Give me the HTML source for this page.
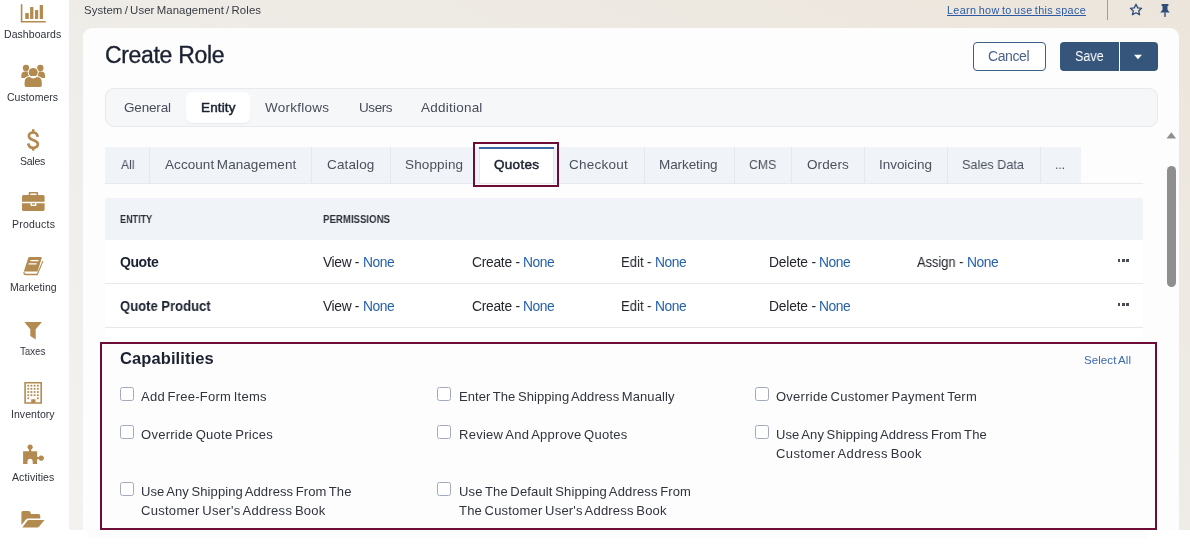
<!DOCTYPE html>
<html><head><meta charset="utf-8"><style>
html,body{margin:0;padding:0;}
body{width:1190px;height:559px;position:relative;overflow:hidden;background:#ffffff;font-family:"Liberation Sans",sans-serif;}
.t{position:absolute;white-space:nowrap;line-height:1;will-change:transform;}
.r{position:absolute;}
</style></head><body>
<div class="r" style="left:69px;top:0px;width:1121px;height:530px;background:linear-gradient(to top right,#f3f2ef 0%,#efede9 45%,#ece5db 100%);"></div>
<div class="r" style="left:83px;top:28px;width:1096px;height:510px;background:#fdfdfd;border-radius:9px 9px 0 0;"></div>
<div class="r" style="left:0px;top:530px;width:1190px;height:29px;background:#ffffff;"></div>
<div class="r" style="left:87px;top:530px;width:1061px;height:8px;background:#fcfcfc;"></div>
<div class="r" style="left:0px;top:0px;width:69px;height:530px;background:#ffffff;"></div>
<svg style="position:absolute;left:16px;top:0px" width="36" height="26" viewBox="16 0 36 26">
<rect x="20.8" y="4" width="1.6" height="18.6" rx="0.8" fill="#b38a4f"/>
<rect x="20.8" y="20.9" width="25.2" height="1.7" rx="0.8" fill="#b38a4f"/>
<rect x="25.2" y="13" width="3.6" height="6" rx="0.6" fill="#b38a4f"/>
<rect x="30.1" y="7" width="3.3" height="12" rx="0.6" fill="#b38a4f"/>
<rect x="35" y="10" width="3.2" height="9" rx="0.6" fill="#b38a4f"/>
<rect x="39.7" y="4.9" width="3.3" height="14.1" rx="0.6" fill="#b38a4f"/>
</svg>
<svg style="position:absolute;left:16px;top:60px" width="36" height="32" viewBox="16 60 36 32">
<circle cx="26" cy="68" r="3.2" fill="#b38a4f"/>
<circle cx="40.3" cy="68" r="3.2" fill="#b38a4f"/>
<path d="M21.4 75.5 Q21.4 71.5 25 71.5 L28 71.5 Q29 74 30 76 L27 78 L21.4 78 Z" fill="#b38a4f"/>
<path d="M45 75.5 Q45 71.5 41.4 71.5 L38.4 71.5 Q37.4 74 36.4 76 L39.4 78 L45 78 Z" fill="#b38a4f"/>
<circle cx="33.2" cy="72.4" r="5.4" fill="#fff"/>
<circle cx="33.2" cy="72.4" r="4.5" fill="#b38a4f"/>
<path d="M23.6 87.8 L23.6 82 Q23.6 76 29.6 76 L36.8 76 Q42.8 76 42.8 82 L42.8 87.8 Z" fill="#fff"/>
<path d="M24.6 85.3 L24.6 82.4 Q24.6 77 29.8 77 Q31 78.4 33.2 78.4 Q35.4 78.4 36.6 77 Q41.8 77 41.8 82.4 L41.8 85.3 Q41.8 86.9 40.2 86.9 L26.2 86.9 Q24.6 86.9 24.6 85.3 Z" fill="#b38a4f"/>
</svg>
<svg style="position:absolute;left:20px;top:124px" width="26" height="32" viewBox="20 124 26 32">
<rect x="32" y="129.2" width="2.5" height="3.5" fill="#b38a4f"/>
<rect x="32" y="147" width="2.5" height="3.6" fill="#b38a4f"/>
<path d="M37.4 135.6 C36.8 133.6 35.3 132.5 33.2 132.5 C30.5 132.5 28.9 133.9 28.9 136.1 C28.9 141.3 37.9 139.3 37.9 144.1 C37.9 146.5 36 147.8 33.2 147.8 C30.7 147.8 29.1 146.7 28.5 144.6" fill="none" stroke="#b38a4f" stroke-width="2.7" stroke-linecap="square"/>
</svg>
<svg style="position:absolute;left:18px;top:186px" width="32" height="30" viewBox="18 186 32 30">
<path d="M28.7 195 L28.7 192.8 Q28.7 191.9 29.6 191.9 L37.2 191.9 Q38.1 191.9 38.1 192.8 L38.1 195 L36.5 195 L36.5 193.4 L30.3 193.4 L30.3 195 Z" fill="#b38a4f"/>
<path d="M22 201.8 L22 196.5 Q22 194.9 23.6 194.9 L43 194.9 Q44.6 194.9 44.6 196.5 L44.6 201.8 Z" fill="#b38a4f"/>
<path d="M22 203.2 L30.6 203.2 L30.6 205.9 L36.3 205.9 L36.3 203.2 L44.6 203.2 L44.6 209.4 Q44.6 211 43 211 L23.6 211 Q22 211 22 209.4 Z" fill="#b38a4f"/>
<rect x="32" y="203.2" width="2.9" height="1.4" fill="#b38a4f"/>
</svg>
<svg style="position:absolute;left:18px;top:250px" width="32" height="32" viewBox="18 250 32 32">
<path d="M28.3 257.8 Q28.6 256.9 29.5 256.9 L41 256.9 Q42 257 41.7 258 L37.6 271.6 L24.6 271.6 Q23.4 271.6 23.4 272.8 Z" fill="#b38a4f"/>
<path d="M23.4 272 Q23 275.3 26 275.3 L37.6 275.3 L43.4 261.3 L42.4 261 L37 273.7 L26 273.7 Q24.6 273.7 24.8 272.4 Z" fill="#b38a4f"/>
<rect x="30.2" y="260" width="8" height="1.3" fill="#fff" transform="skewX(-16) translate(75 0)"/>
<rect x="29.3" y="263.3" width="8" height="1.3" fill="#fff" transform="skewX(-16) translate(75 0)"/>
</svg>
<svg style="position:absolute;left:18px;top:316px" width="32" height="30" viewBox="18 316 32 30">
<path d="M24.4 321.9 L41.9 321.9 L35.7 329.2 L35.7 339.6 L30.3 335.9 L30.3 329.2 Z" fill="#b38a4f"/>
</svg>
<svg style="position:absolute;left:18px;top:378px" width="32" height="32" viewBox="18 378 32 32"><path d="M24.3 382 L42 382 L42 403.8 L24.3 403.8 Z M25.9 383.6 L25.9 402.2 L31.2 402.2 L31.2 399.2 L35.5 399.2 L35.5 402.2 L40.4 402.2 L40.4 383.6 Z" fill="#b38a4f" fill-rule="evenodd"/><rect x="27.400000000000002" y="384.8" width="1.8" height="1.8" fill="#b38a4f"/><rect x="30.5" y="384.8" width="1.8" height="1.8" fill="#b38a4f"/><rect x="33.7" y="384.8" width="1.8" height="1.8" fill="#b38a4f"/><rect x="36.9" y="384.8" width="1.8" height="1.8" fill="#b38a4f"/><rect x="27.400000000000002" y="387.90000000000003" width="1.8" height="1.8" fill="#b38a4f"/><rect x="30.5" y="387.90000000000003" width="1.8" height="1.8" fill="#b38a4f"/><rect x="33.7" y="387.90000000000003" width="1.8" height="1.8" fill="#b38a4f"/><rect x="36.9" y="387.90000000000003" width="1.8" height="1.8" fill="#b38a4f"/><rect x="27.400000000000002" y="391.1" width="1.8" height="1.8" fill="#b38a4f"/><rect x="30.5" y="391.1" width="1.8" height="1.8" fill="#b38a4f"/><rect x="33.7" y="391.1" width="1.8" height="1.8" fill="#b38a4f"/><rect x="36.9" y="391.1" width="1.8" height="1.8" fill="#b38a4f"/><rect x="27.400000000000002" y="394.3" width="1.8" height="1.8" fill="#b38a4f"/><rect x="30.5" y="394.3" width="1.8" height="1.8" fill="#b38a4f"/><rect x="33.7" y="394.3" width="1.8" height="1.8" fill="#b38a4f"/><rect x="36.9" y="394.3" width="1.8" height="1.8" fill="#b38a4f"/><rect x="27.400000000000002" y="397.40000000000003" width="1.8" height="1.8" fill="#b38a4f"/><rect x="36.9" y="397.40000000000003" width="1.8" height="1.8" fill="#b38a4f"/></svg>
<svg style="position:absolute;left:18px;top:440px" width="32" height="30" viewBox="18 440 32 30">
<path d="M23.1 451.3 L28.6 451.3 Q29.4 450.6 29 449.6 A2.7 2.7 0 1 1 31.2 449.6 Q30.8 450.6 31.6 451.3 L37.1 451.3 L37.1 456.6 Q37.8 457.4 38.8 457 A2.7 2.7 0 1 1 38.8 459.2 Q37.8 458.8 37.1 459.6 L37.1 463.9 L32.6 463.9 Q33.2 463.2 32.6 462 A2.6 2.6 0 1 0 27.6 462 Q27 463.2 27.6 463.9 L23.1 463.9 Z" fill="#b38a4f"/>
</svg>
<svg style="position:absolute;left:16px;top:502px" width="36" height="32" viewBox="16 502 36 32">
<path d="M21.4 525 L21.4 512.6 Q21.4 510.9 23.1 510.9 L28.6 510.9 Q30.4 510.9 30.6 512.6 L30.8 514 L38.4 514 Q40.3 514 40.3 515.9 L40.3 518.6 L28 518.6 Q26.6 518.6 25.8 519.8 Z" fill="#b38a4f"/>
<path d="M22.3 527.5 L27.4 520.7 Q27.9 520 28.8 520 L44.6 520 L38.9 526.8 Q38.3 527.5 37.4 527.5 Z" fill="#b38a4f"/>
</svg>
<div class="t" style="left:4.40px;top:29.00px;font-size:10.5px;color:#2e323b;letter-spacing:0.062px;">Dashboards</div>
<div class="t" style="left:7.45px;top:92.00px;font-size:10.5px;color:#2e323b;letter-spacing:0.040px;">Customers</div>
<div class="t" style="left:20.35px;top:156.00px;font-size:10.5px;color:#2e323b;letter-spacing:-0.241px;">Sales</div>
<div class="t" style="left:11.50px;top:219.00px;font-size:10.5px;color:#2e323b;letter-spacing:0.221px;">Products</div>
<div class="t" style="left:9.65px;top:282.00px;font-size:10.5px;color:#2e323b;letter-spacing:0.072px;">Marketing</div>
<div class="t" style="left:20.30px;top:346.00px;font-size:10.5px;color:#2e323b;transform:scaleX(0.9257);transform-origin:0 0;">Taxes</div>
<div class="t" style="left:11.20px;top:409.00px;font-size:10.5px;color:#2e323b;letter-spacing:0.048px;">Inventory</div>
<div class="t" style="left:11.85px;top:472.00px;font-size:10.5px;color:#2e323b;letter-spacing:0.098px;">Activities</div>
<div class="t" style="left:84.00px;top:5.00px;font-size:11.4px;color:#363a42;letter-spacing:0.076px;word-spacing:-1.03px;">System / User Management / Roles</div>
<div class="t" style="left:947.00px;top:5.00px;font-size:10.8px;color:#2d5ba3;letter-spacing:0.348px;word-spacing:-0.97px;text-decoration:underline;">Learn how to use this space</div>
<div class="r" style="left:1107px;top:0px;width:1px;height:20px;background:#9a9ea6;"></div>
<svg style="position:absolute;left:1128px;top:2px" width="16" height="16" viewBox="1128 2 16 16">
<path d="M1136 4.3 L1137.7 7.9 L1141.6 8.3 L1138.7 10.9 L1139.6 14.8 L1136 12.8 L1132.4 14.8 L1133.3 10.9 L1130.4 8.3 L1134.3 7.9 Z" fill="none" stroke="#2e4d78" stroke-width="1.3" stroke-linejoin="round"/>
</svg>
<svg style="position:absolute;left:1158px;top:2px" width="14" height="17" viewBox="1158 2 14 17">
<path d="M1161.6 4 L1168.4 4 L1168.4 5.9 L1167.5 5.9 L1167.5 9.8 L1169.7 12.5 L1160.3 12.5 L1162.5 9.8 L1162.5 5.9 L1161.6 5.9 Z" fill="#2e4d78"/>
<rect x="1164.3" y="12.5" width="1.4" height="4.4" fill="#2e4d78"/>
</svg>
<div class="t" style="left:105.30px;top:44.00px;font-size:23px;color:#1b2130;letter-spacing:-0.325px;-webkit-text-stroke:0.35px #1b2130;">Create Role</div>
<div class="r" style="left:973px;top:42px;width:73px;height:29px;box-sizing:border-box;border:1.3px solid #3e5f86;border-radius:4px;background:#fff;"></div>
<div class="t" style="left:987.90px;top:49.00px;font-size:14px;color:#4a6285;letter-spacing:-0.392px;">Cancel</div>
<div class="r" style="left:1060px;top:42px;width:98px;height:29px;background:#35557b;border-radius:4px;"></div>
<div class="r" style="left:1119px;top:42px;width:1px;height:29px;background:#ffffff;"></div>
<div class="t" style="left:1075.20px;top:49.00px;font-size:14px;color:#ffffff;transform:scaleX(0.9026);transform-origin:0 0;">Save</div>
<svg style="position:absolute;left:1133px;top:54px" width="10" height="6" viewBox="0 0 10 6"><path d="M1 0.7 L9 0.7 L5 5.2 Z" fill="#fff"/></svg>
<div class="r" style="left:105px;top:88px;width:1053px;height:39px;box-sizing:border-box;background:#f6f7f9;border:1px solid #e7e9ed;border-radius:9px;"></div>
<div class="r" style="left:186px;top:92px;width:63.5px;height:31px;background:#ffffff;border-radius:6px;box-shadow:0 1px 2px rgba(0,0,0,0.06);"></div>
<div class="t" style="left:124.40px;top:101.00px;font-size:13.5px;color:#474c59;letter-spacing:-0.177px;">General</div>
<div class="t" style="left:200.90px;top:101.00px;font-size:13.5px;color:#1b2130;letter-spacing:0.127px;-webkit-text-stroke:0.5px #1b2130;">Entity</div>
<div class="t" style="left:265.10px;top:101.00px;font-size:13.5px;color:#474c59;letter-spacing:0.248px;">Workflows</div>
<div class="t" style="left:358.60px;top:101.00px;font-size:13.5px;color:#474c59;letter-spacing:-0.416px;">Users</div>
<div class="t" style="left:421.20px;top:101.00px;font-size:13.5px;color:#474c59;letter-spacing:0.230px;">Additional</div>
<div class="r" style="left:105px;top:147px;width:976px;height:36px;background:#f0f3f8;"></div>
<div class="r" style="left:105px;top:182.5px;width:1038px;height:1px;background:#e6e9ee;"></div>
<div class="r" style="left:149px;top:147px;width:1px;height:36px;background:#e5e8ee;"></div>
<div class="r" style="left:311px;top:147px;width:1px;height:36px;background:#e5e8ee;"></div>
<div class="r" style="left:389.6px;top:147px;width:1px;height:36px;background:#e5e8ee;"></div>
<div class="r" style="left:643.5px;top:147px;width:1px;height:36px;background:#e5e8ee;"></div>
<div class="r" style="left:733.5px;top:147px;width:1px;height:36px;background:#e5e8ee;"></div>
<div class="r" style="left:791.4px;top:147px;width:1px;height:36px;background:#e5e8ee;"></div>
<div class="r" style="left:863.5px;top:147px;width:1px;height:36px;background:#e5e8ee;"></div>
<div class="r" style="left:947.3px;top:147px;width:1px;height:36px;background:#e5e8ee;"></div>
<div class="r" style="left:1039.5px;top:147px;width:1px;height:36px;background:#e5e8ee;"></div>
<div class="r" style="left:478.5px;top:147px;width:75.5px;height:36px;box-sizing:border-box;background:#ffffff;border-left:1px solid #e2e6ec;border-right:1px solid #e2e6ec;"></div>
<div class="r" style="left:479px;top:147px;width:75px;height:2px;background:#3b67a6;"></div>
<div class="r" style="left:473px;top:142px;width:86px;height:45px;box-sizing:border-box;border:2px solid #6c0d35;"></div>
<div class="t" style="left:120.70px;top:158.00px;font-size:13.5px;color:#4b505c;transform:scaleX(0.9000);transform-origin:0 0;">All</div>
<div class="t" style="left:164.70px;top:158.00px;font-size:13.5px;color:#4b505c;letter-spacing:0.065px;word-spacing:-1.21px;">Account Management</div>
<div class="t" style="left:326.90px;top:158.00px;font-size:13.5px;color:#4b505c;letter-spacing:0.140px;">Catalog</div>
<div class="t" style="left:405.30px;top:158.00px;font-size:13.5px;color:#4b505c;letter-spacing:0.144px;">Shopping</div>
<div class="t" style="left:569.20px;top:158.00px;font-size:13.5px;color:#4b505c;letter-spacing:0.248px;">Checkout</div>
<div class="t" style="left:659.20px;top:158.00px;font-size:13.5px;color:#4b505c;letter-spacing:-0.089px;">Marketing</div>
<div class="t" style="left:748.80px;top:158.00px;font-size:13.5px;color:#4b505c;transform:scaleX(0.9100);transform-origin:0 0;">CMS</div>
<div class="t" style="left:806.60px;top:158.00px;font-size:13.5px;color:#4b505c;letter-spacing:0.104px;">Orders</div>
<div class="t" style="left:879.20px;top:158.00px;font-size:13.5px;color:#4b505c;letter-spacing:-0.039px;">Invoicing</div>
<div class="t" style="left:962.40px;top:158.00px;font-size:13.5px;color:#4b505c;transform:scaleX(0.9385);transform-origin:0 0;">Sales Data</div>
<div class="t" style="left:1055.30px;top:158.00px;font-size:13.5px;color:#4b505c;transform:scaleX(0.8889);transform-origin:0 0;">...</div>
<div class="t" style="left:493.80px;top:158.00px;font-size:13.5px;color:#1b2130;letter-spacing:0.291px;-webkit-text-stroke:0.5px #1b2130;">Quotes</div>
<div class="r" style="left:105px;top:198px;width:1038px;height:42px;background:#f0f3f8;"></div>
<div class="t" style="left:119.80px;top:214.00px;font-size:10.7px;color:#2b2f38;font-weight:700;transform:scaleX(0.8474);transform-origin:0 0;">ENTITY</div>
<div class="t" style="left:323.20px;top:214.00px;font-size:10.7px;color:#2b2f38;font-weight:700;transform:scaleX(0.9027);transform-origin:0 0;">PERMISSIONS</div>
<div class="r" style="left:105px;top:240px;width:1038px;height:43px;background:#ffffff;"></div>
<div class="r" style="left:105px;top:283px;width:1038px;height:1px;background:#e6e8ec;"></div>
<div class="r" style="left:105px;top:284px;width:1038px;height:43px;background:#ffffff;"></div>
<div class="r" style="left:105px;top:327px;width:1038px;height:1px;background:#e6e8ec;"></div>
<div class="r" style="left:105px;top:328px;width:1038px;height:9px;background:#ffffff;"></div>
<div class="t" style="left:119.60px;top:255.00px;font-size:14px;color:#1b2130;font-weight:700;letter-spacing:-0.430px;">Quote</div>
<div class="t" style="left:119.60px;top:299.00px;font-size:14px;color:#1b2130;font-weight:700;transform:scaleX(0.9322);transform-origin:0 0;">Quote Product</div>
<div class="t" style="left:323.20px;top:256.00px;font-size:13.8px;color:#23262d;letter-spacing:-0.336px;">View -</div>
<div class="t" style="left:363.00px;top:256.00px;font-size:13.8px;color:#2661ac;letter-spacing:-0.428px;">None</div>
<div class="t" style="left:472.00px;top:256.00px;font-size:13.8px;color:#23262d;letter-spacing:-0.261px;">Create -</div>
<div class="t" style="left:523.40px;top:256.00px;font-size:13.8px;color:#2661ac;letter-spacing:-0.428px;">None</div>
<div class="t" style="left:620.60px;top:256.00px;font-size:13.8px;color:#23262d;transform:scaleX(0.9476);transform-origin:0 0;">Edit -</div>
<div class="t" style="left:654.50px;top:256.00px;font-size:13.8px;color:#2661ac;letter-spacing:-0.428px;">None</div>
<div class="t" style="left:768.80px;top:256.00px;font-size:13.8px;color:#23262d;letter-spacing:-0.171px;">Delete -</div>
<div class="t" style="left:819.30px;top:256.00px;font-size:13.8px;color:#2661ac;letter-spacing:-0.428px;">None</div>
<div class="t" style="left:323.20px;top:300.00px;font-size:13.8px;color:#23262d;letter-spacing:-0.336px;">View -</div>
<div class="t" style="left:363.00px;top:300.00px;font-size:13.8px;color:#2661ac;letter-spacing:-0.428px;">None</div>
<div class="t" style="left:472.00px;top:300.00px;font-size:13.8px;color:#23262d;letter-spacing:-0.261px;">Create -</div>
<div class="t" style="left:523.40px;top:300.00px;font-size:13.8px;color:#2661ac;letter-spacing:-0.428px;">None</div>
<div class="t" style="left:620.60px;top:300.00px;font-size:13.8px;color:#23262d;transform:scaleX(0.9476);transform-origin:0 0;">Edit -</div>
<div class="t" style="left:654.50px;top:300.00px;font-size:13.8px;color:#2661ac;letter-spacing:-0.428px;">None</div>
<div class="t" style="left:768.80px;top:300.00px;font-size:13.8px;color:#23262d;letter-spacing:-0.171px;">Delete -</div>
<div class="t" style="left:819.30px;top:300.00px;font-size:13.8px;color:#2661ac;letter-spacing:-0.428px;">None</div>
<div class="t" style="left:917.30px;top:256.00px;font-size:13.8px;color:#23262d;transform:scaleX(0.9309);transform-origin:0 0;">Assign -</div>
<div class="t" style="left:967.10px;top:256.00px;font-size:13.8px;color:#2661ac;letter-spacing:-0.428px;">None</div>
<div class="r" style="left:1117.5px;top:259px;width:2.8px;height:3px;background:#484c55;"></div>
<div class="r" style="left:1121.9px;top:259px;width:2.8px;height:3px;background:#484c55;"></div>
<div class="r" style="left:1126.3px;top:259px;width:2.8px;height:3px;background:#484c55;"></div>
<div class="r" style="left:1117.5px;top:303px;width:2.8px;height:3px;background:#484c55;"></div>
<div class="r" style="left:1121.9px;top:303px;width:2.8px;height:3px;background:#484c55;"></div>
<div class="r" style="left:1126.3px;top:303px;width:2.8px;height:3px;background:#484c55;"></div>
<div class="r" style="left:100px;top:342px;width:1057px;height:188px;box-sizing:border-box;border:2px solid #6c0d35;"></div>
<div class="t" style="left:119.70px;top:350.00px;font-size:16.5px;color:#1b2130;font-weight:700;letter-spacing:0.093px;">Capabilities</div>
<div class="t" style="left:1083.90px;top:355.00px;font-size:11.5px;color:#3a6aae;letter-spacing:0.082px;word-spacing:-1.03px;">Select All</div>
<div class="r" style="left:119.5px;top:387px;width:14px;height:14px;box-sizing:border-box;border:1px solid #a2aabe;border-radius:2.5px;background:#fff;"></div>
<div class="t" style="left:141.30px;top:390.00px;font-size:13px;color:#30343d;letter-spacing:0.239px;word-spacing:-1.17px;">Add Free-Form Items</div>
<div class="r" style="left:119.5px;top:425px;width:14px;height:14px;box-sizing:border-box;border:1px solid #a2aabe;border-radius:2.5px;background:#fff;"></div>
<div class="t" style="left:141.30px;top:428.00px;font-size:13px;color:#30343d;letter-spacing:0.271px;word-spacing:-1.17px;">Override Quote Prices</div>
<div class="r" style="left:119.5px;top:482px;width:14px;height:14px;box-sizing:border-box;border:1px solid #a2aabe;border-radius:2.5px;background:#fff;"></div>
<div class="t" style="left:141.30px;top:485.00px;font-size:13px;color:#30343d;letter-spacing:0.103px;word-spacing:-1.17px;">Use Any Shipping Address From The</div>
<div class="t" style="left:141.30px;top:504.00px;font-size:13px;color:#30343d;letter-spacing:0.284px;word-spacing:-1.17px;">Customer User's Address Book</div>
<div class="r" style="left:437.0px;top:387px;width:14px;height:14px;box-sizing:border-box;border:1px solid #a2aabe;border-radius:2.5px;background:#fff;"></div>
<div class="t" style="left:459.10px;top:390.00px;font-size:13px;color:#30343d;letter-spacing:0.083px;word-spacing:-1.17px;">Enter The Shipping Address Manually</div>
<div class="r" style="left:437.0px;top:425px;width:14px;height:14px;box-sizing:border-box;border:1px solid #a2aabe;border-radius:2.5px;background:#fff;"></div>
<div class="t" style="left:459.10px;top:428.00px;font-size:13px;color:#30343d;letter-spacing:0.266px;word-spacing:-1.17px;">Review And Approve Quotes</div>
<div class="r" style="left:437.0px;top:482px;width:14px;height:14px;box-sizing:border-box;border:1px solid #a2aabe;border-radius:2.5px;background:#fff;"></div>
<div class="t" style="left:459.10px;top:485.00px;font-size:13px;color:#30343d;letter-spacing:0.149px;word-spacing:-1.17px;">Use The Default Shipping Address From</div>
<div class="t" style="left:459.10px;top:504.00px;font-size:13px;color:#30343d;letter-spacing:0.191px;word-spacing:-1.17px;">The Customer User's Address Book</div>
<div class="r" style="left:754.5px;top:387px;width:14px;height:14px;box-sizing:border-box;border:1px solid #a2aabe;border-radius:2.5px;background:#fff;"></div>
<div class="t" style="left:776.10px;top:390.00px;font-size:13px;color:#30343d;letter-spacing:0.252px;word-spacing:-1.17px;">Override Customer Payment Term</div>
<div class="r" style="left:754.5px;top:425px;width:14px;height:14px;box-sizing:border-box;border:1px solid #a2aabe;border-radius:2.5px;background:#fff;"></div>
<div class="t" style="left:776.10px;top:428.00px;font-size:13px;color:#30343d;letter-spacing:0.115px;word-spacing:-1.17px;">Use Any Shipping Address From The</div>
<div class="t" style="left:776.10px;top:447.00px;font-size:13px;color:#30343d;letter-spacing:0.382px;word-spacing:-1.17px;">Customer Address Book</div>
<svg style="position:absolute;left:1166px;top:131px" width="11" height="8" viewBox="0 0 11 8"><path d="M0.5 7.4 L5.3 1.3 L10.1 7.4 Z" fill="#8f8f8f"/></svg>
<div class="r" style="left:1166.8px;top:166px;width:9.3px;height:121px;background:#8f8f8f;border-radius:5px;"></div>
</body></html>
